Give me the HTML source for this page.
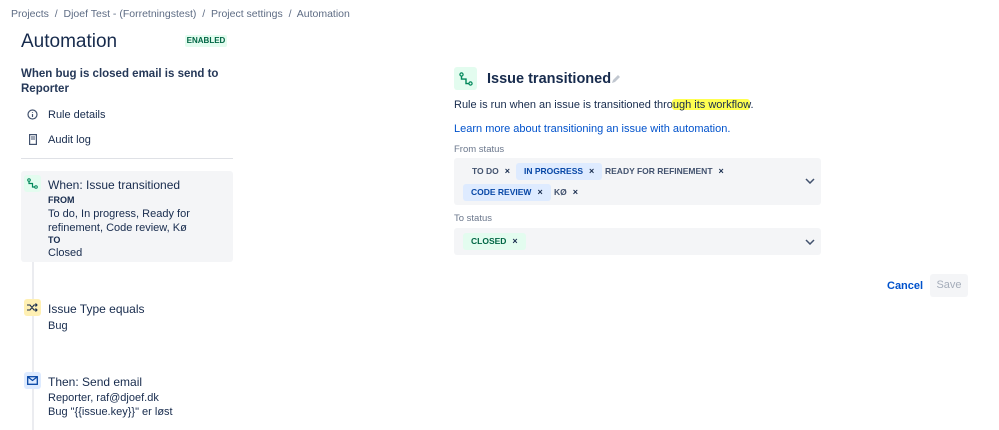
<!DOCTYPE html>
<html><head><meta charset="utf-8"><style>
*{margin:0;padding:0;box-sizing:border-box}
body{width:999px;height:427px;background:#fff;font-family:"Liberation Sans",sans-serif;color:#172b4d;position:relative;overflow:hidden}
.a{position:absolute;white-space:nowrap}
.s{font-size:11px}
.chip{position:absolute;height:17px;line-height:17px;font-size:8.5px;font-weight:bold;padding:0 8px;border-radius:3px;color:#42526e}
.chip b{font-size:9px;margin-left:6px;color:#172b4d}
.blue{background:#deebff;color:#0747a6}
.green{background:#e3fcef;color:#006644}
.box{position:absolute;background:#f4f5f7;border-radius:3px}
.ic{position:absolute;width:17px;height:17px;border-radius:3px}
</style></head><body>
<div class="a" style="left:11px;top:8px;font-size:10.5px;color:#5e6c84">Projects &nbsp;/&nbsp; Djoef Test - (Forretningstest) &nbsp;/&nbsp; Project settings &nbsp;/&nbsp; Automation</div>
<div class="a" style="left:21px;top:31px;font-size:19px;color:#172b4d">Automation</div>
<div class="a" style="left:185px;top:35px;width:42px;height:12px;background:#e3fcef;color:#006644;font-size:8px;font-weight:bold;text-align:center;line-height:12px;border-radius:2px">ENABLED</div>
<div class="a" style="left:21px;top:67px;font-size:11.5px;font-weight:bold;line-height:15px;white-space:normal;width:200px;color:#253858">When bug is closed email is send to Reporter</div>
<svg class="a" style="left:27px;top:109px" width="11" height="11" viewBox="0 0 11 11"><circle cx="5.5" cy="5.5" r="4.5" fill="none" stroke="#42526e" stroke-width="1.2"/><path d="M5.5 5v3M5.5 3v.8" stroke="#42526e" stroke-width="1.2"/></svg>
<div class="a s" style="left:48px;top:109px">Rule details</div>
<svg class="a" style="left:29px;top:134px" width="8" height="11" viewBox="0 0 8 11"><rect x=".6" y=".6" width="6.8" height="9.8" fill="none" stroke="#42526e" stroke-width="1.2"/><path d="M2 3h4M2 5h4" stroke="#42526e"/></svg>
<div class="a s" style="left:48px;top:134px">Audit log</div>
<div class="a" style="left:21px;top:158px;width:212px;height:1px;background:#dfe1e6"></div>
<div class="a" style="left:32px;top:190px;width:2px;height:240px;background:#ebecf0"></div>
<div class="box" style="left:21px;top:171px;width:212px;height:91px"></div>
<div class="ic" style="left:24px;top:175px;background:#e3fcef"></div>
<svg class="a" style="left:27px;top:178px" width="11" height="11" viewBox="0 0 11 11"><circle cx="2" cy="2" r="1.3" fill="none" stroke="#00875a"/><circle cx="9" cy="9" r="1.3" fill="none" stroke="#00875a"/><path d="M2 3.3v2.2h3.5v3.5h2.2" fill="none" stroke="#00875a" stroke-width="1.2"/></svg>
<div class="a" style="left:48px;top:178px;font-size:12px">When: Issue transitioned</div>
<div class="a" style="left:48px;top:195px;font-size:9px;font-weight:bold">FROM</div>
<div class="a s" style="left:48px;top:207px;line-height:14px">To do, In progress, Ready for<br>refinement, Code review, Kø</div>
<div class="a" style="left:48px;top:235px;font-size:9px;font-weight:bold">TO</div>
<div class="a s" style="left:48px;top:247px">Closed</div>
<div class="ic" style="left:24px;top:299px;background:#fff0b3"></div>
<svg class="a" style="left:27px;top:303px" width="11" height="9" viewBox="0 0 11 9"><path d="M0 2h3l4 5h3M0 7h3l4-5h3M8.5 0.5l1.5 1.5-1.5 1.5M8.5 5.5l1.5 1.5-1.5 1.5" fill="none" stroke="#172b4d" stroke-width="1.1"/></svg>
<div class="a" style="left:48px;top:302px;font-size:12px">Issue Type equals</div>
<div class="a s" style="left:48px;top:320px">Bug</div>
<div class="ic" style="left:24px;top:372px;background:#deebff"></div>
<svg class="a" style="left:27px;top:376px" width="11" height="9" viewBox="0 0 11 9"><rect x=".7" y=".7" width="9.6" height="7.6" fill="none" stroke="#0747a6" stroke-width="1.3"/><path d="M1 1l4.5 3.5L10 1" fill="none" stroke="#0747a6" stroke-width="1.2"/></svg>
<div class="a" style="left:48px;top:375px;font-size:12px">Then: Send email</div>
<div class="a s" style="left:48px;top:392px">Reporter, raf@djoef.dk</div>
<div class="a s" style="left:48px;top:406px">Bug "{{issue.key}}" er løst</div>

<div class="a" style="left:454px;top:67px;width:23px;height:23px;background:#e3fcef;border-radius:3px"></div>
<svg class="a" style="left:459px;top:72px" width="14" height="14" viewBox="0 0 14 14"><circle cx="2.5" cy="2.5" r="1.6" fill="none" stroke="#00875a" stroke-width="1.2"/><circle cx="11.5" cy="11.5" r="1.6" fill="none" stroke="#00875a" stroke-width="1.2"/><path d="M2.5 4.1v3h4.5v4.5h2.9" fill="none" stroke="#00875a" stroke-width="1.4"/></svg>
<div class="a" style="left:487px;top:71px;font-size:14.5px;font-weight:bold;color:#172b4d">Issue transitioned</div>
<svg class="a" style="left:611px;top:74px" width="10" height="10" viewBox="0 0 10 10"><path d="M1 9l1-3 5-5 2 2-5 5z" fill="#c1c7d0"/></svg>
<div class="a" style="left:672px;top:99px;width:78px;height:11px;background:#ffff33;border-radius:3px;opacity:.85"></div>
<div class="a s" style="left:454px;top:99px">Rule is run when an issue is transitioned through its workflow.</div>
<div class="a s" style="left:454px;top:123px;color:#0052cc">Learn more about transitioning an issue with automation.</div>
<div class="a" style="left:454px;top:144px;font-size:9.5px;color:#6b778c">From status</div>
<div class="box" style="left:454px;top:158px;width:367px;height:47px"></div>
<div class="chip" style="left:464px;top:163px">TO DO<b>×</b></div>
<div class="chip blue" style="left:516px;top:163px">IN PROGRESS<b>×</b></div>
<div class="chip" style="left:597px;top:163px">READY FOR REFINEMENT<b>×</b></div>
<div class="chip blue" style="left:463px;top:184px">CODE REVIEW<b>×</b></div>
<div class="chip" style="left:546px;top:184px">KØ<b>×</b></div>
<svg class="a" style="left:805px;top:178px" width="10" height="6" viewBox="0 0 10 6"><path d="M1 1l4 4 4-4" fill="none" stroke="#42526e" stroke-width="1.5"/></svg>
<div class="a" style="left:454px;top:213px;font-size:9.5px;color:#6b778c">To status</div>
<div class="box" style="left:454px;top:228px;width:367px;height:27px"></div>
<div class="chip green" style="left:463px;top:233px">CLOSED<b>×</b></div>
<svg class="a" style="left:805px;top:239px" width="10" height="6" viewBox="0 0 10 6"><path d="M1 1l4 4 4-4" fill="none" stroke="#42526e" stroke-width="1.5"/></svg>
<div class="a" style="left:887px;top:280px;font-size:11px;font-weight:bold;color:#0052cc">Cancel</div>
<div class="a" style="left:930px;top:274px;width:38px;height:23px;background:#f4f5f7;border-radius:3px;color:#a5adba;font-size:11px;text-align:center;line-height:23px">Save</div>
</body></html>
